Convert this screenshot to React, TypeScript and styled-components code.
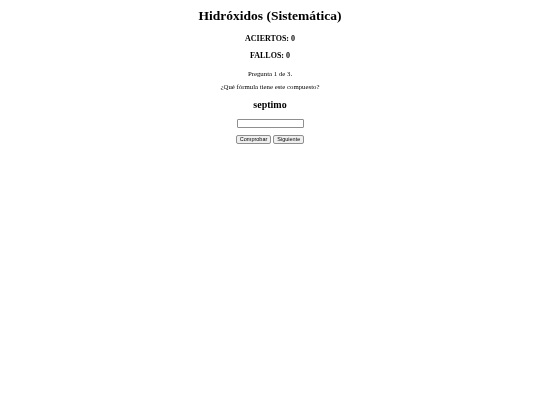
import React, { useState } from 'react';
import styled, { createGlobalStyle } from 'styled-components';

const GlobalStyle = createGlobalStyle`
  body {
    margin: 0;
    background: #ffffff;
    color: #000000;
    font-family: "Liberation Serif", "Times New Roman", serif;
    -webkit-font-smoothing: antialiased;
  }
`;

// composited layer -> grayscale text antialiasing, like the reference
const Quiz = styled.main`
  display: flex;
  flex-direction: column;
  align-items: center;
  padding-top: 7px;
  will-change: transform;
`;

const Title = styled.h1`
  margin: 0;
  font-size: 13.5px;
  line-height: 18px;
  font-weight: bold;
`;

const Score = styled.h4`
  margin: 9px 0 0;
  font-size: 8px;
  line-height: 10px;
  font-weight: bold;
  & + & {
    margin-top: 7px;
  }
`;

const Info = styled.p<{ $gap: number }>`
  margin: ${(p) => p.$gap}px 0 0;
  font-size: 6.8px;
  line-height: 9px;
`;

const Compound = styled.h3`
  margin: 7px 0 0;
  font-size: 10px;
  line-height: 13px;
  font-weight: bold;
`;

const Answer = styled.input`
  margin-top: 8px;
  box-sizing: border-box;
  width: 67px;
  height: 9px;
  padding: 0 2px;
  border: 1px solid #8f8f8f;
  border-radius: 1px;
  font-size: 6px;
`;

const Actions = styled.div`
  display: flex;
  gap: 2px;
  margin-top: 7px;
`;

const Button = styled.button`
  box-sizing: border-box;
  height: 9px;
  padding: 0 3px;
  border: 1px solid #8f8f8f;
  border-radius: 2px;
  background: #efefef;
  color: #000;
  font-family: "Liberation Sans", Arial, sans-serif;
  font-size: 5.5px;
  line-height: 7px;
`;

export default function App() {
  const [answer, setAnswer] = useState('');
  return (
    <>
      <GlobalStyle />
      <Quiz>
        <Title>Hidróxidos (Sistemática)</Title>
        <Score>ACIERTOS: 0</Score>
        <Score>FALLOS: 0</Score>
        <Info $gap={8}>Pregunta 1 de 3.</Info>
        <Info $gap={4}>¿Qué fórmula tiene este compuesto?</Info>
        <Compound>septimo</Compound>
        <Answer value={answer} onChange={(e) => setAnswer(e.target.value)} />
        <Actions>
          <Button>Comprobar</Button>
          <Button>Siguiente</Button>
        </Actions>
      </Quiz>
    </>
  );
}
